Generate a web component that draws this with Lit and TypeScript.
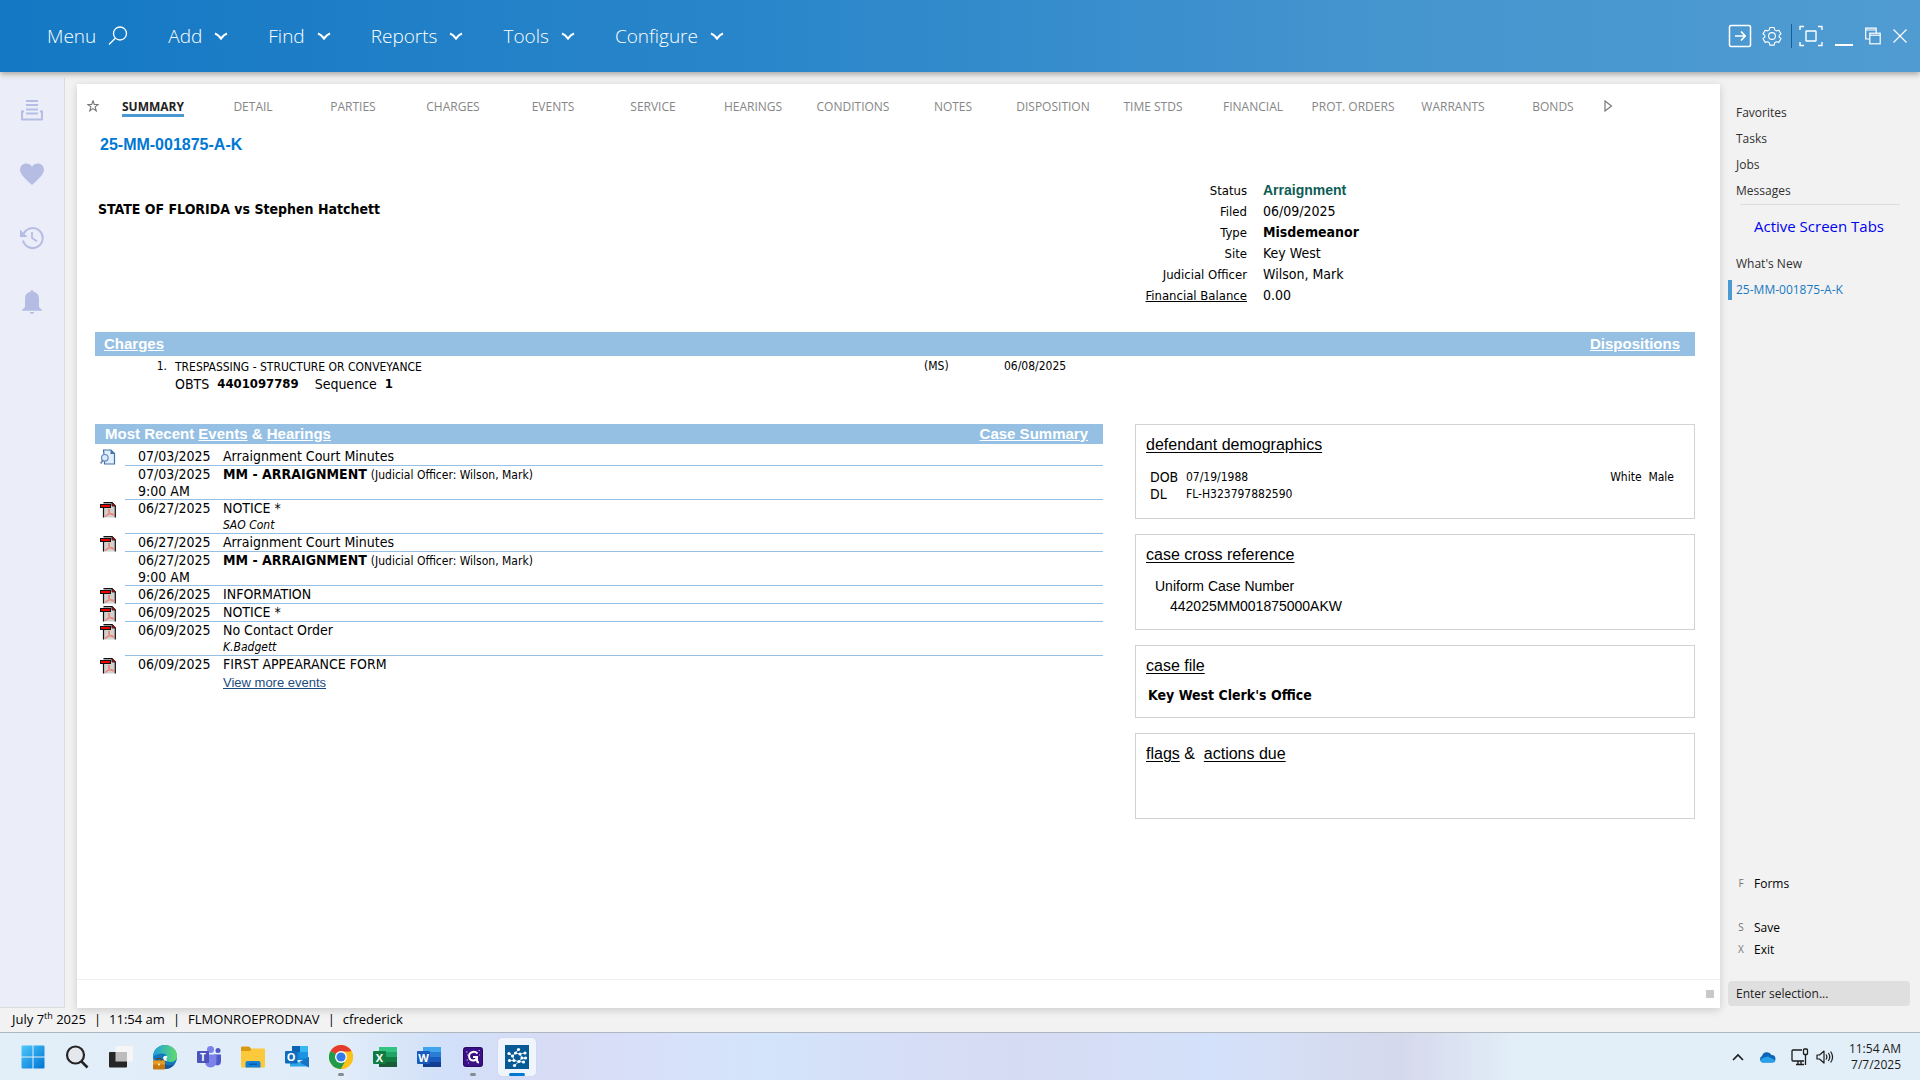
import { LitElement, html, svg, css, nothing, TemplateResult } from "lit";
import { customElement } from "lit/decorators.js";
import { classMap } from "lit/directives/class-map.js";

const MENUS = ["Add", "Find", "Reports", "Tools", "Configure"];

const TABS = [
  "SUMMARY", "DETAIL", "PARTIES", "CHARGES", "EVENTS", "SERVICE", "HEARINGS", "CONDITIONS",
  "NOTES", "DISPOSITION", "TIME STDS", "FINANCIAL", "PROT. ORDERS", "WARRANTS", "BONDS",
];

interface EventRow {
  icon?: "pdf" | "doc";
  date: string;
  time?: string;
  title: string;
  hearing?: string;
  note?: string;
  more?: boolean;
}

const OFFICER = "(Judicial Officer: Wilson, Mark)";

const EVENTS: EventRow[] = [
  { icon: "doc", date: "07/03/2025", title: "Arraignment Court Minutes" },
  { date: "07/03/2025", time: "9:00 AM", title: "MM - ARRAIGNMENT", hearing: OFFICER },
  { icon: "pdf", date: "06/27/2025", title: "NOTICE *", note: "SAO Cont" },
  { icon: "pdf", date: "06/27/2025", title: "Arraignment Court Minutes" },
  { date: "06/27/2025", time: "9:00 AM", title: "MM - ARRAIGNMENT", hearing: OFFICER },
  { icon: "pdf", date: "06/26/2025", title: "INFORMATION" },
  { icon: "pdf", date: "06/09/2025", title: "NOTICE *" },
  { icon: "pdf", date: "06/09/2025", title: "No Contact Order", note: "K.Badgett" },
  { icon: "pdf", date: "06/09/2025", title: "FIRST APPEARANCE FORM", more: true },
];

const icon = (w: number, h: number, body: unknown) =>
  html`<svg class="icon" width=${w} height=${h} viewBox="0 0 ${w} ${h}" aria-hidden="true">${body}</svg>`;

const chevron = icon(14, 9, svg`<path d="M1 1.500Q4 2.500 7 6.500 10 2.500 13 1.500" fill="none" stroke="#fff" stroke-width="2.200"/>`);

const search = icon(20, 20, svg`<g fill="none" stroke="#fff" stroke-width="1.300"><circle cx="12" cy="7.500" r="6.500"/><path d="M7.300 12.200L1 18.500"/></g>`);

const WINDOW_ICONS: [string, TemplateResult][] = [
  ["Sign out", icon(24, 24, svg`<g fill="none" stroke="#fff" stroke-width="1.500" stroke-linejoin="round"><rect x="1.500" y="1.500" width="21" height="21" rx="1.500"/><path d="M7 12h10M13 7.500l4.300 4.500-4.300 4.500" stroke-width="1.700"/></g>`)],
  ["Settings", icon(20, 20, svg`<g fill="none" stroke="#fff" stroke-width="1.100" stroke-linejoin="round"><circle cx="10" cy="10" r="3.400"/><path d="M7.800 1.500h4.400l.5 2.400 1.700 1 2.400-.7 2.200 3.700-1.800 1.500v1.800l1.800 1.500-2.200 3.700-2.400-.7-1.700 1-.5 2.400H7.800l-.5-2.400-1.700-1-2.400.7L1 12.700l1.800-1.500V9.400L1 7.900l2.200-3.700 2.400.7 1.700-1z"/></g>`)],
  ["Full screen", icon(24, 22, svg`<g fill="none" stroke="#fff" stroke-width="1.400"><path d="M1 5V1.500h4M19 1.500h4V5M23 17v3.500h-4M5 20.500H1V17"/><rect x="7" y="6" width="10" height="10" rx=".5"/></g>`)],
  ["Minimize", icon(18, 22, svg`<rect y="19" width="18" height="2" fill="#fff"/>`)],
  ["Restore", icon(16, 18, svg`<g fill="none" stroke="#fff" stroke-width="1.200"><path d="M4.500 12H.7V1.200h10.500V6M.7 3h10.500"/><rect x="4.800" y="6.200" width="10.400" height="10.600"/><path d="M4.800 8.200h10.400"/></g>`)],
  ["Close", icon(14, 14, svg`<path d="M.5.5l13 13M13.500.5l-13 13" stroke="#fff" stroke-width="1.200"/>`)],
];

const RAIL: [string, TemplateResult][] = [
  ["Print queue", icon(24, 24, svg`<g fill="#b6bde4"><path d="M6 2h12v2H6zM6 6h12v2H6zM6 10.500h12v2H6zM6 14.500h12v2H6z"/><path d="M1 12.500h3v2H3V20.500h18V14.500h-1v-2h3V21.500q0 1-1.200 1H2.200Q1 22.500 1 21.500z"/></g>`)],
  ["Favorites", icon(24, 24, svg`<path fill="#b6bde4" d="M12 23C6 17.500 0 12.500 0 7.800 0 4 2.800 1.500 6.200 1.500 8.600 1.500 10.900 2.700 12 4.700 13.100 2.700 15.400 1.500 17.800 1.500 21.200 1.500 24 4 24 7.800 24 12.500 18 17.500 12 23z"/>`)],
  ["History", icon(24, 24, svg`<g fill="none" stroke="#b6bde4" stroke-width="2"><path d="M3.800 7.500A10 10 0 1 1 3 14.500"/><path d="M12 6v6l5 3.200" stroke-width="1.800"/></g><path d="M0 3.500V11h7.500z" fill="#b6bde4"/>`)],
  ["Notifications", icon(24, 24, svg`<g fill="#b6bde4"><path d="M12 0q1.500 0 1.500 1.800C17.500 2.600 19 5.500 19 9v8l3 3v.8H2V20l3-3V9C5 5.500 6.500 2.600 10.500 1.800 10.500 0 12 0 12 0z"/><path d="M9.800 22h4.400q-.4 2-2.200 2t-2.200-2z"/></g>`)],
];

const pdfIcon = icon(16, 16, svg`<path d="M3.500.5h8.500l3.500 3.500v11.500h-12z" fill="#d2cfcf"/><path d="M3.500 5v10.500M3.500.7H12L15.300 4v11.500" fill="none" stroke="#111" stroke-width="1.200"/><path d="M12 .5L15.500 4H12z" fill="#e11" stroke="#111" stroke-width=".8"/><path d="M9 7c1 0 .5 2.600-.5 4.300S5.800 15 5.200 14.500s1.600-1.900 4-2.400 5-.3 5 .6-3 0-4.300-1.500S8 7 9 7z" fill="none" stroke="#f0705f" stroke-width=".9"/><rect x=".5" y="2.500" width="10" height="3" fill="#f00000" stroke="#111"/>`);

const docIcon = icon(16, 16, svg`<path d="M3.500 1h7.500l3.500 3.500V15H4.500V10z" fill="#e3eefb" stroke="#4272ae" stroke-width="1.200"/><path d="M10.500 1v4h4z" fill="#4272ae"/><circle cx="4.800" cy="8.800" r="3.300" fill="#dceafa" stroke="#5f8cc4" stroke-width="1.200"/><path d="M3 11l-2.300 3.500" stroke="#6d7fa0" stroke-width="1.600"/>`);

const tile = (letter: string, dark: string, shades: string[]) => icon(24, 24, svg`
  ${shades.map((c, i) => svg`<rect x="6" y=${2 + i * 5} width="18" height="5" fill=${c}/>`)}
  <rect y="6" width="13" height="13" rx="1" fill=${dark}/>
  <text x="6.500" y="16.500" text-anchor="middle" font-size="11" font-weight="700" fill="#fff">${letter}</text>`);

const LOGO_DOTS: [number, number][] = [
  [4, 8.5], [7.5, 11], [10.5, 8], [13.5, 4.5], [15, 9], [20, 8],
  [20.5, 13], [17, 13], [18.5, 17], [14, 16.5], [9.5, 20.5], [9, 15.5], [4.5, 15.5],
];

const APPS: { name: string; art: TemplateResult; state?: string }[] = [
  { name: "Start", art: icon(24, 24, svg`<defs><linearGradient id="w" x1="0" y1="0" x2="1" y2="1"><stop stop-color="#4cc8fb"/><stop offset="1" stop-color="#0074d4"/></linearGradient></defs><path fill="url(#w)" d="M1.500.5h10v11h-11v-10q0-1 1-1zM12.500.5h10q1 0 1 1v10h-11zM.5 12.500h11v11h-10q-1 0-1-1zM12.500 12.500h11v10q0 1-1 1h-10z"/>`) },
  { name: "Search", art: icon(24, 24, svg`<circle cx="10.500" cy="10" r="8.500" fill="#e4e8ec" stroke="#252525" stroke-width="2.200"/><path d="M16.500 16.500l6 6" stroke="#252525" stroke-width="2.600"/>`) },
  { name: "Task view", art: icon(24, 24, svg`<rect x="6.500" y="1" width="17.500" height="15.500" rx="1" fill="#f6f6f6"/><rect y="7" width="18" height="15.500" rx="1" fill="#262626"/><rect x="6.500" y="7" width="11.500" height="9.500" fill="#bdbdbd"/>`) },
  { name: "Edge", art: icon(26, 26, svg`<defs><linearGradient id="e" x1="0" y1="0" x2="1" y2="0"><stop stop-color="#1b9fe0"/><stop offset="1" stop-color="#62dc6a"/></linearGradient></defs><circle cx="13" cy="13" r="12" fill="#1377bd"/><path d="M1 13C1.500 5 7 1 13 1c7 0 12 5 12 11 0 4-3 6-6.500 6-3 0-4.500-1-4-2 1.500-3 0-6.500-4-6.500C6.500 9.500 3 11 1 13z" fill="url(#e)"/><path d="M10.500 15c0 5 5 8 12 5-2.500 4-7 5-10 5-5-1-6-6-2-10z" fill="#17549b"/><path d="M11 13.500q1.500-3 4.500-1-1.500 2-.5 4.500-3.500 0-4-3.500z" fill="#f2f9ff"/><rect x="1" y="16.500" width="12" height="9" rx="1" fill="#c57812"/><path d="M1 17.500q0-1 1-1h10q1 0 1 1V20.500H1z" fill="#e49a24"/><rect x="6" y="19.500" width="2" height="2" fill="#ffe08a"/><path d="M5 16.500v-2h4v2" fill="none" stroke="#6d3e0a"/>`) },
  { name: "Teams", art: icon(24, 24, svg`<circle cx="13.500" cy="4.500" r="3.500" fill="#7b83eb"/><circle cx="21" cy="5.500" r="2.500" fill="#5059c9"/><path d="M17 9.500h7V16q0 4-3.500 4.500-3.500-.5-3.500-4.500z" fill="#5059c9"/><path d="M8 9.500h11.500V16q0 6-6 6.500Q8 22 8 16z" fill="#7b83eb"/><rect y="6" width="12" height="12" rx="1" fill="#4b53bc"/><text x="6" y="16" text-anchor="middle" font-size="10" font-weight="700" fill="#fff">T</text>`) },
  { name: "File Explorer", art: icon(24, 24, svg`<path d="M0 2.500Q0 1.500 1 1.500h7l3 3H24V21H0z" fill="#d99a12"/><path d="M0 6h9l2-2.500h12q1 0 1 1V21.500q0 1-1 1H1q-1 0-1-1z" fill="#fcc93d"/><path d="M4.500 22.500V18q0-2 2-2h11q2 0 2 2v4.500z" fill="#1280d8"/><rect x="8" y="18.500" width="8" height="1.500" fill="#0a5ba6"/>`) },
  { name: "Outlook", art: icon(24, 24, svg`<path d="M7 1h16v14H7z" fill="#1488d8"/><path d="M7 1h8v6H7z" fill="#0a63b0"/><path d="M15 1h8v6h-8z" fill="#35b8f1"/><path d="M15 7h8v6h-8z" fill="#1c93e3"/><path d="M5 12l10 6 9-6v9.500H5z" fill="#2aa5ea"/><path d="M14 17l10 5.500V12z" fill="#1573c4"/><rect y="6" width="12.500" height="12.500" rx="1" fill="#0f6cbd"/><text x="6.200" y="16.200" text-anchor="middle" font-size="11" font-weight="700" fill="#fff">O</text>`) },
  { name: "Chrome", state: "open", art: icon(24, 24, svg`<circle cx="12" cy="12" r="12" fill="#fbc116"/><path d="M12 12L1.600 6A12 12 0 0 1 22.400 6z" fill="#e33b2e"/><path d="M1.600 6A12 12 0 0 0 12 24l5.200-9L12 12z" fill="#229a4b"/><path d="M12 6.500h10.700A12 12 0 0 1 12 24l5-9z" fill="#fbc116"/><circle cx="12" cy="12" r="6" fill="#fff"/><circle cx="12" cy="12" r="4.600" fill="#3379e8"/>`) },
  { name: "Excel", art: tile("X", "#107c41", ["#33c481", "#21a366", "#107c41", "#185c37"]) },
  { name: "Word", art: tile("W", "#185abd", ["#41a5ee", "#2b7cd3", "#185abd", "#103f91"]) },
  { name: "G app", state: "open", art: icon(20, 20, svg`<rect width="20" height="20" rx="3" fill="#2a0765"/><rect x="1" y="1" width="18" height="18" rx="3" fill="#3b0f85"/><path d="M14.500 6.500Q12 4 9 5.200q-3.500 1.500-2.800 5Q7 13.700 10.500 13.500q3 0 3.500-3.500h-4M14 10v3q0 2.500 2 2.500" fill="none" stroke="#fff" stroke-width="2"/><path d="M3 5h1.500M4 8h1M3.500 13H5M15.500 3.500H17M16 8h1M5 16h1" stroke="#c9a8ff"/>`) },
  { name: "Case manager", state: "active", art: icon(24, 24, svg`<rect width="24" height="24" fill="#065a96"/><path d="M4 8.500L7.500 11l3-3 3-3.500M10.500 8L15 9l5-1M15 9l2 4h3.500M17 13l-3 3.500 4.500.5M14 16.500l-4.500 4M14 16.500l-5-1H4.500M9 15.500L7.500 11" fill="none" stroke="#fff" stroke-width=".8"/>${LOGO_DOTS.map(([x, y]) => svg`<circle cx=${x} cy=${y} r="1.600" fill="#fff"/>`)}`) },
];

@customElement("app-root")
export class AppRoot extends LitElement {
  static styles = css`
    :host {
      display: flex;
      flex-direction: column;
      min-height: 100vh;
      background: #f2f2f2;
      color: #000;
      font-family: "Open Sans", "Noto Sans", sans-serif;
    }
    *, *::before, *::after { box-sizing: border-box; }
    .icon { display: block; flex: none; }
    button {
      display: flex; align-items: center; padding: 0; border: 0;
      background: none; color: inherit; font: inherit; cursor: pointer;
    }
    a { color: inherit; }
    h1, h2, p, dl, dd { margin: 0; padding: 0; }

    .topbar {
      position: relative;
      display: flex; align-items: center; justify-content: space-between;
      height: 72px; padding: 0 8px 0 47px;
      background: linear-gradient(90deg, #1478c4, #2a86ca 40%, #4796cf 75%, #4f9bd2);
      box-shadow: 0 2px 6px rgba(0, 0, 0, .35);
      color: #fff;
    }
    .menus { display: flex; gap: 40px; font-size: 19px; font-weight: 300; }
    .menus button { gap: 12px; }
    .window { display: flex; align-items: center; }
    .window button { justify-content: center; height: 24px; }
    .window .w0 { width: 24px; }
    .window .w1 { width: 39px; }
    .window .w2 { width: 39px; border-left: 1px solid #165d92; }
    .window .w3 { width: 28px; }
    .window .w4 { width: 30px; }
    .window .w5 { width: 24px; }

    .body { display: flex; flex: 1; }
    .rail {
      display: flex; flex-direction: column; gap: 40px;
      width: 65px; margin-top: 6px; padding: 20px 20px 0;
      background: #ebeef9; border-right: 1px solid #dcdcdc; border-bottom: 1px solid #dcdcdc;
    }
    .page {
      display: flex; flex-direction: column; flex: 1; min-width: 0;
      margin: 12px 0 0 12px;
      background: #fff; box-shadow: 0 2px 8px rgba(0, 0, 0, .16);
    }

    .tabs { display: flex; align-items: center; height: 44px; padding-left: 10px; color: #868686; font-size: 12px; }
    .tabs .star { width: 16px; }
    .tabs .tab { justify-content: center; width: 100px; }
    .tabs .label { padding-top: 3px; border-bottom: 3px solid transparent; line-height: 15px; white-space: nowrap; }
    .tabs .current .label { border-color: #4b99d2; color: #222; font-weight: 700; }

    .content {
      flex: 1; padding: 0 25px 0 18px;
      font-family: "DejaVu Sans Condensed", "DejaVu Sans", sans-serif;
      font-size: 14px; line-height: 17px;
    }
    .arial { font-family: "Liberation Sans", Arial, sans-serif; }
    .number { padding: 7px 0 0 5px; color: #0078d4; font-size: 16px; line-height: 20px; }
    .summary { display: grid; grid-template-columns: minmax(0, 1fr) 662px; height: 177px; }
    .style { padding: 45px 0 0 3px; line-height: 18px; }
    .facts { display: grid; grid-template-columns: 214px 1fr; grid-auto-rows: 21px; align-content: start; column-gap: 16px; padding-top: 25px; line-height: 21px; }
    .facts dt { text-align: right; font-size: 13px; }
    .status { color: #0d5c55; }

    .band {
      display: flex; justify-content: space-between; align-items: center;
      background: #95c0e3; color: #fff;
      font-size: 15px; font-weight: 700;
    }
    .band h2 { font-size: 15px; }
    .band.wide { height: 24px; padding: 0 15px 2px 9px; }
    .band.slim { height: 20px; padding: 0 15px 2px 10px; }

    .charges { width: 100%; height: 68px; border-collapse: collapse; table-layout: fixed; }
    .charges td { padding: 2px 0 0; vertical-align: top; }
    .charges .idx { width: 80px; padding-right: 8px; text-align: right; }
    .charges .level { width: 80px; }
    .charges .on { width: 691px; }
    .small { font-size: 12px; }
    .obts { display: flex; gap: 8px; line-height: 16px; }
    .obts b { font-size: 13px; }
    .obts b:nth-child(2) { margin-right: 8px; }

    .columns { display: grid; grid-template-columns: minmax(0, 1008fr) minmax(0, 560fr); column-gap: 32px; align-items: start; }
    .events { width: 100%; border-collapse: separate; border-spacing: 0; }
    .events td { padding: 0; vertical-align: top; }
    .events .pic { width: 30px; padding: 2px 0 0 5px; }
    .events .when { width: 98px; padding-left: 13px; }
    .events .when, .events .what { border-bottom: 1px solid #95c0e3; white-space: nowrap; }
    .events tr:first-child td { padding-top: 4px; }
    .events tr:first-child .pic { padding-top: 5px; }
    .events tr:last-child td { border-bottom: 0; }
    .events .second { display: block; line-height: 16px; }
    .events .more { display: block; padding-top: 1px; color: #1b4b80; font-size: 13px; }

    .cards { display: flex; flex-direction: column; gap: 15px; }
    .card { padding: 9px 20px 15px 10px; border: 1px solid #d2d2d2; }
    .card h2 { font-family: "Liberation Sans", Arial, sans-serif; font-size: 16px; font-weight: 400; line-height: 22px; }
    .card h2 a { text-underline-offset: 2px; }
    .demo { display: flex; justify-content: space-between; padding: 13px 0 0 4px; }
    .ids { display: grid; grid-template-columns: 36px auto; }
    .xref { padding: 10px 0 0 9px; line-height: 20px; }
    .xref p + p { padding-left: 15px; }
    .office { padding: 10px 0 0 2px; }
    .card.cross { padding-bottom: 13px; }
    .card.file { padding-bottom: 13px; }
    .card.flags { padding-bottom: 53px; }
    .footer { display: flex; justify-content: flex-end; align-items: center; height: 29px; padding-right: 6px; border-top: 1px solid #efefef; }
    .grip { width: 8px; height: 8px; background: #c8c8c8; }

    .side { display: flex; flex-direction: column; width: 200px; padding: 28px 0 2px 8px; font-size: 12px; color: #303030; }
    .side a { text-decoration: none; }
    .links a { display: block; padding-left: 8px; line-height: 26px; }
    .screens { margin: 0 20px 13px 12px; padding: 9px 0 0 14px; border-top: 1px solid #dcdcdc; color: #00e; font-size: 15px; line-height: 24px; font-weight: 400; white-space: nowrap; }
    .links .open { padding-left: 4px; margin: 3px 0; border-left: 4px solid #4b99d2; color: #1a78c2; line-height: 20px; }
    .actions { margin-top: auto; color: #000; }
    .actions button { gap: 10px; height: 22px; padding-left: 10px; }
    .actions .key { width: 6px; color: #777; font-size: 10px; }
    .actions .gap { margin-bottom: 22px; }
    .entry {
      width: 182px; height: 25px; margin-top: 21px; padding: 0 8px; border: 0; border-radius: 4px;
      background: #dfdfdf; color: #222; font: 12px "Open Sans", sans-serif;
    }
    .entry::placeholder { color: #222; opacity: 1; }

    .statusbar { display: flex; gap: 8px; height: 24px; padding-left: 12px; font-size: 13px; line-height: 22px; }
    .statusbar sup { font-size: 9px; line-height: 1px; }

    .taskbar {
      display: flex; align-items: center; justify-content: space-between;
      height: 48px; padding: 0 19px 0 11px; border-top: 1px solid #aeb6c0;
      background: linear-gradient(90deg, #e2eef8, #e0ecf8 18%, #d2e0f9 23%, #d8dcf5 29%, #d8e1fa 35%, #d3e4fb 40%, #d6def7 47%, #d5dbf2 53%, #d4e1fa 63%, #d5d9ec 73%, #e2eef8 79%);
    }
    .apps, .tray, .system { display: flex; align-items: center; }
    .apps button {
      position: relative; justify-content: center; width: 38px; height: 38px; margin: 0 3px; border-radius: 4px;
    }
    .apps .active { background: #f0f4fd; box-shadow: 0 0 1px #a9b4c8; }
    .apps .open::after, .apps .active::after {
      content: ""; position: absolute; bottom: 0; left: 16px; width: 6px; height: 3px; border-radius: 2px; background: #868a92;
    }
    .apps .active::after { left: 11px; width: 16px; background: #0078d4; }
    .tray { gap: 15px; }
    .system { gap: 7px; }
    .clock { display: flex; flex-direction: column; align-items: flex-end; color: #1b1b1b; font-size: 12px; line-height: 16px; }
  `;

  private eventRow(e: EventRow) {
    return html`<tr>
      <td class="pic">${e.icon === "pdf" ? pdfIcon : e.icon === "doc" ? docIcon : nothing}</td>
      <td class="when">${e.date}${e.time ? html`<span class="second">${e.time}</span>` : nothing}</td>
      <td class="what">
        ${e.hearing ? html`<b>${e.title}</b> <span class="small">${e.hearing}</span>` : e.title}
        ${e.note ? html`<i class="second small">${e.note}</i>` : nothing}
        ${e.more ? html`<a class="more arial" href="#events">View more events</a>` : nothing}
      </td>
    </tr>`;
  }

  private topbar() {
    return html`<header class="topbar">
      <nav class="menus" aria-label="Main">
        <button>Menu ${search}</button>
        ${MENUS.map((m) => html`<button>${m} ${chevron}</button>`)}
      </nav>
      <div class="window">
        ${WINDOW_ICONS.map(([name, art], i) => html`<button class="w${i}" aria-label=${name}>${art}</button>`)}
      </div>
    </header>`;
  }

  private summary() {
    return html`
      <h1 class="number arial">25-MM-001875-A-K</h1>
      <section class="summary">
        <b class="style">STATE OF FLORIDA vs Stephen Hatchett</b>
        <dl class="facts">
          <dt>Status</dt><dd><b class="status arial">Arraignment</b></dd>
          <dt>Filed</dt><dd>06/09/2025</dd>
          <dt>Type</dt><dd><b>Misdemeanor</b></dd>
          <dt>Site</dt><dd>Key West</dd>
          <dt>Judicial Officer</dt><dd>Wilson, Mark</dd>
          <dt><a href="#financial">Financial Balance</a></dt><dd>0.00</dd>
        </dl>
      </section>
      <div class="band wide arial"><h2><a href="#charges">Charges</a></h2><a href="#dispositions">Dispositions</a></div>
      <table class="charges">
        <tbody><tr>
          <td class="idx small">1.</td>
          <td><span class="small">TRESPASSING - STRUCTURE OR CONVEYANCE</span>
            <div class="obts"><span>OBTS</span><b>4401097789</b><span>Sequence</span><b>1</b></div></td>
          <td class="level small">(MS)</td>
          <td class="on small">06/08/2025</td>
        </tr></tbody>
      </table>
      <div class="columns">
        <section>
          <div class="band slim arial">
            <h2>Most Recent <a href="#events">Events</a> &amp; <a href="#hearings">Hearings</a></h2>
            <a href="#case">Case Summary</a>
          </div>
          <table class="events"><tbody>${EVENTS.map((e) => this.eventRow(e))}</tbody></table>
        </section>
        <aside class="cards">
          <section class="card">
            <h2><a href="#demographics">defendant demographics</a></h2>
            <div class="demo">
              <div class="ids">
                <span>DOB</span><span class="small">07/19/1988</span>
                <span>DL</span><span class="small">FL-H323797882590</span>
              </div>
              <span class="small">White&nbsp; Male</span>
            </div>
          </section>
          <section class="card cross">
            <h2><a href="#xref">case cross reference</a></h2>
            <div class="xref arial"><p>Uniform Case Number</p><p>442025MM001875000AKW</p></div>
          </section>
          <section class="card file">
            <h2><a href="#file">case file</a></h2>
            <p class="office"><b>Key West Clerk's Office</b></p>
          </section>
          <section class="card flags">
            <h2><a href="#flags">flags</a> &amp;&nbsp; <a href="#actions">actions due</a></h2>
          </section>
        </aside>
      </div>`;
  }

  private side() {
    return html`<aside class="side">
      <nav class="links">
        <a href="#favorites">Favorites</a><a href="#tasks">Tasks</a><a href="#jobs">Jobs</a><a href="#messages">Messages</a>
      </nav>
      <h2 class="screens">Active Screen Tabs</h2>
      <nav class="links">
        <a href="#new">What's New</a><a class="open" href="#case">25-MM-001875-A-K</a>
      </nav>
      <div class="actions">
        <button class="gap"><span class="key">F</span>Forms</button>
        <button><span class="key">S</span>Save</button>
        <button><span class="key">X</span>Exit</button>
        <input class="entry" type="text" aria-label="Enter selection" placeholder="Enter selection..." />
      </div>
    </aside>`;
  }

  private taskbar() {
    return html`<footer class="taskbar">
      <div class="apps">
        ${APPS.map((a) => html`<button aria-label=${a.name} class=${classMap({ open: a.state === "open", active: a.state === "active" })}>${a.art}</button>`)}
      </div>
      <div class="tray">
        <button aria-label="Show hidden icons">${icon(12, 8, svg`<path d="M1 7l5-5 5 5" fill="none" stroke="#1b1b1b" stroke-width="1.600"/>`)}</button>
        ${icon(17, 12, svg`<path d="M3.500 11.500A3.500 3.500 0 0 1 3 5 5.200 5.200 0 0 1 12.500 4 3.800 3.800 0 0 1 13.500 11.500z" fill="#0a64b8"/><path d="M2 10.500Q1.500 7 5 6.500L9 5.500l6 3Q17 9.500 16 10.800q-.6.700-2 .7H3.500q-1 0-1.500-1z" fill="#28a1ea"/>`)}
        <button class="system" aria-label="Network and volume">
          ${icon(18, 18, svg`<g fill="none" stroke="#1b1b1b" stroke-width="1.300"><path d="M11 2H2Q1 2 1 3v9q0 1 1 1h11M5 16.500h8M7 13v3.500M10 13v3.500"/><rect x="12.500" y="1" width="4" height="5.500" rx="1"/><path d="M14.500 6.500V17"/></g>`)}
          ${icon(18, 16, svg`<g fill="none" stroke="#1b1b1b" stroke-width="1.200" stroke-linejoin="round"><path d="M1 6v4h2.500L8 14V2L3.500 6zM10 5.500q1.800 2.500 0 5M12.300 4q3 4 0 8M14.600 2.500q4 5.500 0 11"/></g>`)}
        </button>
        <time class="clock"><span>11:54 AM</span><span>7/7/2025</span></time>
      </div>
    </footer>`;
  }

  render() {
    return html`
      ${this.topbar()}
      <div class="body">
        <nav class="rail" aria-label="Shortcuts">
          ${RAIL.map(([name, art]) => html`<button aria-label=${name}>${art}</button>`)}
        </nav>
        <main class="page">
          <nav class="tabs" aria-label="Case sections">
            <button class="star" aria-label="Favorite">${icon(12, 12, svg`<path d="M6 .8l1.300 3.700h3.900L8.100 6.900l1.200 4L6 8.600l-3.300 2.300 1.200-4L.8 4.500h3.900z" fill="none" stroke="#777" stroke-width="1.100"/>`)}</button>
            ${TABS.map((t, i) => html`<button class="tab ${i === 0 ? "current" : ""}"><span class="label">${t}</span></button>`)}
            <button aria-label="More sections">${icon(10, 12, svg`<path d="M2 1l6.500 5L2 11z" fill="none" stroke="#777" stroke-width="1.200"/>`)}</button>
          </nav>
          <div class="content">${this.summary()}</div>
          <div class="footer"><span class="grip"></span></div>
        </main>
        ${this.side()}
      </div>
      <div class="statusbar">
        <span>July 7<sup>th</sup> 2025</span><span>|</span><span>11:54 am</span><span>|</span><span>FLMONROEPRODNAV</span><span>|</span><span>cfrederick</span>
      </div>
      ${this.taskbar()}
    `;
  }
}
